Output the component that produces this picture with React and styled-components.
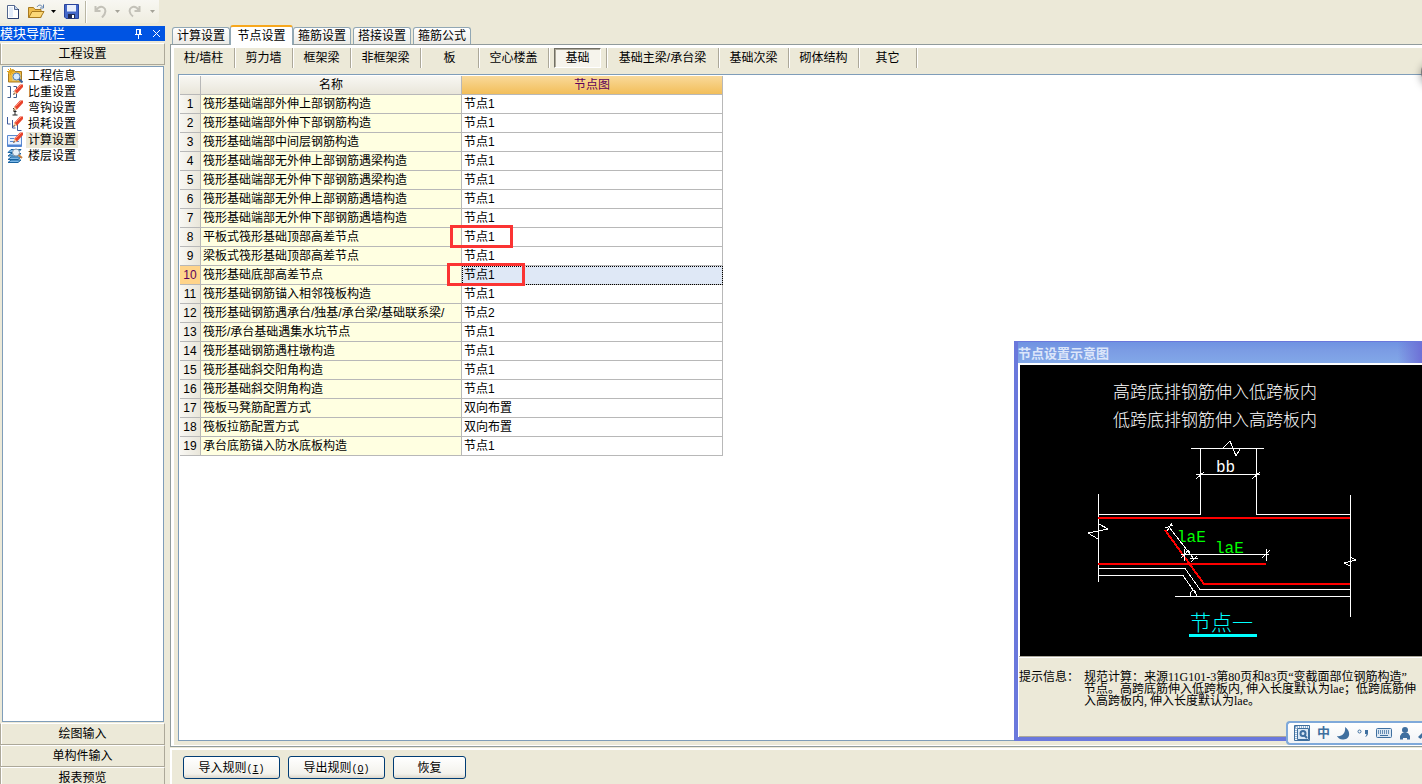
import React, { useState } from "react";
import styled, { createGlobalStyle } from "styled-components";

const modules = [
  { label: "工程信息", icon: "info" },
  { label: "比重设置", icon: "weight" },
  { label: "弯钩设置", icon: "hook" },
  { label: "损耗设置", icon: "loss" },
  { label: "计算设置", icon: "calc" },
  { label: "楼层设置", icon: "floor" },
];

const tabs = ["计算设置", "节点设置", "箍筋设置", "搭接设置", "箍筋公式"];

const categories = [
  { label: "柱/墙柱", width: 62 },
  { label: "剪力墙", width: 58 },
  { label: "框架梁", width: 58 },
  { label: "非框架梁", width: 70 },
  { label: "板", width: 58 },
  { label: "空心楼盖", width: 70 },
  { label: "基础", width: 58 },
  { label: "基础主梁/承台梁", width: 112 },
  { label: "基础次梁", width: 70 },
  { label: "砌体结构", width: 70 },
  { label: "其它", width: 58 },
];

const nodes = [
  ["筏形基础端部外伸上部钢筋构造", "节点1"],
  ["筏形基础端部外伸下部钢筋构造", "节点1"],
  ["筏形基础端部中间层钢筋构造", "节点1"],
  ["筏形基础端部无外伸上部钢筋遇梁构造", "节点1"],
  ["筏形基础端部无外伸下部钢筋遇梁构造", "节点1"],
  ["筏形基础端部无外伸上部钢筋遇墙构造", "节点1"],
  ["筏形基础端部无外伸下部钢筋遇墙构造", "节点1"],
  ["平板式筏形基础顶部高差节点", "节点1"],
  ["梁板式筏形基础顶部高差节点", "节点1"],
  ["筏形基础底部高差节点", "节点1"],
  ["筏形基础钢筋锚入相邻筏板构造", "节点1"],
  ["筏形基础钢筋遇承台/独基/承台梁/基础联系梁/", "节点2"],
  ["筏形/承台基础遇集水坑节点", "节点1"],
  ["筏形基础钢筋遇柱墩构造", "节点1"],
  ["筏形基础斜交阳角构造", "节点1"],
  ["筏形基础斜交阴角构造", "节点1"],
  ["筏板马凳筋配置方式", "双向布置"],
  ["筏板拉筋配置方式", "双向布置"],
  ["承台底筋锚入防水底板构造", "节点1"],
];

function App() {
  const [tab, setTab] = useState("节点设置");
  const [category, setCategory] = useState("基础");
  const [module, setModule] = useState("计算设置");
  const [row, setRow] = useState(9);

  return (
    <Page>
      <GlobalStyle />
      <Toolbar />
      <Body>
        <Sidebar>
          <SidebarTitle>
            <span>模块导航栏</span>
            <TitleButton aria-label="固定">
              <svg width="9" height="10" viewBox="0 0 9 10" fill="none" stroke="#fff">
                <path d="M2.5 1v4.5M5.5 1v4.5M6.5 1v4.5M2 .5h5M1 5.5h7M4.5 6v4" />
              </svg>
            </TitleButton>
            <TitleButton aria-label="关闭">
              <svg width="9" height="9" viewBox="0 0 9 9" stroke="#fff">
                <path d="M1 1l7 7M8 1L1 8" />
              </svg>
            </TitleButton>
          </SidebarTitle>
          <GroupButton $top>工程设置</GroupButton>
          <ModuleList>
            {modules.map((item) => (
              <ModuleItem key={item.label} onClick={() => setModule(item.label)}>
                <ModuleIcon name={item.icon} />
                <ModuleLabel $active={item.label === module}>
                  {item.label}
                </ModuleLabel>
              </ModuleItem>
            ))}
          </ModuleList>
          <GroupButton>绘图输入</GroupButton>
          <GroupButton>单构件输入</GroupButton>
          <GroupButton>报表预览</GroupButton>
        </Sidebar>

        <Main>
          <TabStrip>
            {tabs.map((label) => (
              <Tab
                key={label}
                $active={label === tab}
                onClick={() => setTab(label)}
              >
                {label}
              </Tab>
            ))}
          </TabStrip>
          <Panel>
            <PanelInner>
              <CategoryBar>
                {categories.map((item) => (
                  <CategorySlot key={item.label} $width={item.width}>
                    <Category
                      $active={item.label === category}
                      onClick={() => setCategory(item.label)}
                    >
                      {item.label}
                    </Category>
                  </CategorySlot>
                ))}
              </CategoryBar>
              <GridBox>
                <NodeTable>
                  <colgroup>
                    <col width="21" />
                    <col width="261" />
                    <col width="261" />
                  </colgroup>
                  <thead>
                    <tr>
                      <HeadCell />
                      <HeadCell>名称</HeadCell>
                      <HeadCell $active>节点图</HeadCell>
                    </tr>
                  </thead>
                  <tbody>
                    {nodes.map(([name, value], i) => (
                      <tr key={name} onClick={() => setRow(i)}>
                        <IndexCell $active={i === row}>{i + 1}</IndexCell>
                        <NameCell>{name}</NameCell>
                        <ValueCell $active={i === row}>
                          {value}
                          {i === 7 && <Mark />}
                          {i === 9 && <Mark $wide />}
                        </ValueCell>
                      </tr>
                    ))}
                  </tbody>
                </NodeTable>
              </GridBox>
            </PanelInner>
          </Panel>
          <Footer>
            <PushButton $wide>
              导入规则<Mnemonic>(<u>I</u>)</Mnemonic>
            </PushButton>
            <PushButton $wide>
              导出规则<Mnemonic>(<u>O</u>)</Mnemonic>
            </PushButton>
            <PushButton>恢复</PushButton>
          </Footer>
        </Main>
      </Body>
      <FloatingBall />
      <Preview />
      <InputMethodBar />
    </Page>
  );
}

const Toolbar = () => (
  <ToolbarRow>
    <ToolGroup>
      <ToolButton aria-label="新建" $width={26}>
        <svg width="12" height="14" viewBox="0 0 12 14">
          <path d="M.5.5h7l4 4v9H.5z" fill="#fff" stroke="#53678f" />
          <path d="M2 12.5V2h4v10z" fill="#e3ecfa" />
          <path d="M7.5.5v4h4" fill="#c5d5ee" stroke="#53678f" />
          <path d="M11.5 4v9.500H1" fill="none" stroke="#2b3f70" />
        </svg>
      </ToolButton>
      <ToolButton aria-label="打开" $width={20}>
        <svg width="17" height="15" viewBox="0 0 17 15">
          <path d="M.5 13.5v-10h5l1.500 2h6v8z" fill="#f0bd4c" stroke="#a87a20" />
          <path d="M.8 13.500l3.200-6h12l-3.500 6z" fill="#fcd878" stroke="#a87a20" />
          <path d="M9 3c1.500-2.500 4-2.500 5.500 0M15.500.5v3.500h-3.500" fill="none" stroke="#5d7fae" />
        </svg>
      </ToolButton>
      <ToolButton aria-label="打开选项" $width={15}>
        <Caret color="#000" />
      </ToolButton>
      <ToolButton aria-label="保存" $width={20}>
        <svg width="15" height="15" viewBox="0 0 15 15">
          <path d="M.5.5h14v14H2L.5 13z" fill="#4468c8" stroke="#29439b" />
          <path d="M3 1h9v6.500H3z" fill="#e9effc" />
          <path d="M4 10h7v4.500H4z" fill="#222c55" />
          <path d="M8 11h2v3H8z" fill="#fff" />
        </svg>
      </ToolButton>
      <ToolDivider />
      <ToolButton aria-label="撤销" $width={22}>
        <svg width="13" height="13" viewBox="0 0 13 13" fill="none" stroke="#c3c1b8" strokeWidth="2">
          <path d="M1.500 1v5h5M2 5.500C4 2.500 7 1 9.500 2.500s3 5.500-1.500 10" />
        </svg>
      </ToolButton>
      <ToolButton aria-label="撤销选项" $width={12}>
        <Caret color="#a5a399" />
      </ToolButton>
      <ToolButton aria-label="恢复" $width={22}>
        <svg width="13" height="13" viewBox="0 0 13 13" fill="none" stroke="#c3c1b8" strokeWidth="2">
          <path d="M11.500 1v5h-5M11 5.500C9 2.500 6 1 3.500 2.500s-3 5.500 1.500 9" />
        </svg>
      </ToolButton>
      <ToolButton aria-label="恢复选项" $width={14}>
        <Caret color="#a5a399" />
      </ToolButton>
    </ToolGroup>
  </ToolbarRow>
);

const Caret = ({ color }) => (
  <svg width="5" height="3" viewBox="0 0 5 3">
    <path d="M0 0h5L2.500 3z" fill={color} />
  </svg>
);

const Pencil = () => (
  <>
    <path d="M7 10l.5-3.500L13 .5h3v2.500L10 9.500z" fill="#e8432c" />
    <path d="M8.500 6.500L14 1" stroke="#ff8d75" />
    <path d="M6 11l1.500-4.500 2.500 3z" fill="#f4c79a" />
    <path d="M6 11l1-2 1 1z" fill="#333" />
  </>
);

const ModuleIcon = ({ name }) => (
  <svg width="16" height="16" viewBox="0 0 16 16" fill="none">
    {name === "info" && (
      <>
        <path d="M1.500 4.500v9.500h13V3.500H8l-1-1.500H4z" fill="#f1b93c" stroke="#a87a20" />
        <path d="M5 6h9v7H5z" fill="#e2c675" />
        <path d="M3.500 0v7M0 3.500h7M1 1l5 5M6 1L1 6" stroke="#e3a51a" />
        <circle cx="9.500" cy="8.500" r="3.500" fill="#d7ebff" stroke="#547fb5" />
        <path d="M12 11l3.500 3.500" stroke="#375f9c" strokeWidth="2" />
      </>
    )}
    {name === "weight" && (
      <>
        <path d="M.5 2.500h3v11h-3M6.500 2.500h3v5h-3M9.500 7.500v6h-3" stroke="#3e5b8b" />
        <Pencil />
      </>
    )}
    {name === "hook" && (
      <>
        <path d="M6 8.500h4M8 8v7M5.500 15h5M6.500 11.500h3" stroke="#222" />
        <Pencil />
      </>
    )}
    {name === "loss" && (
      <>
        <path d="M.5 1v7h3M5.500 4v8h3M10.500 8v6.500h4" stroke="#3e5b9b" />
        <Pencil />
      </>
    )}
    {name === "calc" && (
      <>
        <path d="M.5 3.500h14v11H.5z" fill="#e8f1ff" stroke="#5a89cf" />
        <path d="M.5 12.500h14v2H.5z" fill="#4f82d0" />
        <path d="M3 6.500h4M3 9.500h9" stroke="#5a89cf" />
        <Pencil />
      </>
    )}
    {name === "floor" && (
      <>
        <path d="M1 4.500l3-3h10l-3 3zM1 8l3-2.500h10L11 8zM1 11.500L4 9h10l-3 2.500zM1 14.500L4 12h10l-3 2.500z" fill="#7db8e8" stroke="#17629f" />
        <circle cx="9" cy="4.500" r="3.500" fill="#e6f0f8" stroke="#8397ad" />
        <path d="M11.500 7l3.500 3" stroke="#c57e3e" strokeWidth="2" />
      </>
    )}
  </svg>
);

const Preview = () => (
  <PreviewWindow>
    <PreviewTitle>节点设置示意图</PreviewTitle>
    <PreviewBody>
      <Drawing viewBox="0 0 402 291" width="402" height="291">
        <g fill="#fff" fontSize="17" fontWeight="300">
          <text x="93" y="33">高跨底排钢筋伸入低跨板内</text>
          <text x="93" y="61">低跨底排钢筋伸入高跨板内</text>
        </g>
        <g fill="none" stroke="#fff" shapeRendering="crispEdges">
          <path d="M171 83.500h73M180.500 84v65.500H78M236.500 84v65.500h94" />
          <path d="M203 83l7-7 6 15 4-7" />
          <path d="M176 109.500h64M176 114l8-7M232 114l8-7" />
          <path d="M78.500 129v88M330.500 130v122" />
          <path d="M79 159l9 5-20 4 10 6" />
          <path d="M330 192l6 3-12 3 6 3" />
          <path d="M78 203.500h87l15 21h150" />
          <path d="M78 210.500h85l14 20M155 231.500h175" />
          <path d="M170 231c0-5 3-7 6-4" />
        </g>
        <g fill="none" stroke="#f00" strokeWidth="2" shapeRendering="crispEdges">
          <path d="M78 153h252M78 199h168M145 165l39 54h146" />
        </g>
        <g fill="none" stroke="#fff" shapeRendering="crispEdges">
          <path d="M149 162l25 32M145 163l8-3M147 166l5-8M170 193l8 1M171 197l6-6M166 186l4 0" />
          <path d="M161 189.500h88M164.500 184v12M161 193l8-8M246.500 184v12M242 193l8-8" />
        </g>
        <g fontFamily='"Liberation Mono", monospace' fontSize="16">
          <text x="196" y="107" fill="#fff">bb</text>
          <text x="157" y="177" fill="#0f0">laE</text>
          <text x="195" y="188" fill="#0f0">laE</text>
        </g>
        <text x="170" y="265" fill="#0ff" fontSize="21" fontWeight="300">节点一</text>
        <path d="M169 270.500h68" stroke="#0ff" strokeWidth="3" />
      </Drawing>
      <Hint>
        <span>提示信息：</span>
        <HintText>
          规范计算：来源11G101-3第80页和83页“变截面部位钢筋构造”
          <br />
          节点。高跨底筋伸入低跨板内, 伸入长度默认为lae；低跨底筋伸
          <br />
          入高跨板内, 伸入长度默认为lae。
        </HintText>
      </Hint>
    </PreviewBody>
  </PreviewWindow>
);

const InputMethodBar = () => (
  <ImeBar>
    <svg width="16" height="16" viewBox="0 0 16 16" fill="none" stroke="#3f6f9f">
      <path d="M.5.5h15v15H.5z" fill="#f3f8fd" />
      <path d="M3.500 3.500h11v11h-11z" fill="#dbe8f5" />
      <path d="M1 2h14M2 1v14" strokeDasharray="1 1" />
      <circle cx="9" cy="8.500" r="2.500" strokeWidth="2" />
      <path d="M10 10l3 3" strokeWidth="2" />
    </svg>
    <ImeMode>中</ImeMode>
    <svg width="13" height="13" viewBox="0 0 13 13" fill="#3f6f9f">
      <path d="M8 0c6 4 5.500 12-1.500 12.500C3 12.800 1 11 0 9c5 1 9-3 8-9z" />
    </svg>
    <svg width="12" height="10" viewBox="0 0 12 10" fill="none" stroke="#3f6f9f">
      <circle cx="2.500" cy="3.500" r="1.500" />
      <path d="M8 2h3v3c0 2-1 3.500-3 4 1-1 1.500-2 1.500-3H8z" fill="#3f6f9f" stroke="none" />
    </svg>
    <svg width="16" height="10" viewBox="0 0 16 10" fill="none" stroke="#3f6f9f">
      <rect x=".5" y=".5" width="15" height="9" rx="1" fill="#dce8f4" />
      <path d="M2 3h12M2 5h12" strokeDasharray="1 1" strokeWidth="1.500" />
      <path d="M4 7.500h8" />
    </svg>
    <svg width="12" height="13" viewBox="0 0 12 13" fill="#3f6f9f">
      <circle cx="6" cy="3" r="3" />
      <path d="M3 6h6l2 3v3.500H8V11H4v1.500H1V9z" />
    </svg>
    <svg width="12" height="13" viewBox="0 0 12 13" fill="#3f6f9f">
      <path d="M0 10l5-5c-1-3 1-5 4-4L7.500 3l2 2L12 3.500c0 3-2 4-4.500 3.500l-5 5z" />
    </svg>
  </ImeBar>
);

const GlobalStyle = createGlobalStyle`
  * {
    box-sizing: border-box;
  }
  body {
    margin: 0;
    background: #ece9d8;
    color: #000;
    font: 12px/16px "Liberation Sans", "Noto Sans CJK SC", sans-serif;
  }
  button {
    margin: 0;
    padding: 0;
    border: 0;
    background: none;
    color: inherit;
    font: inherit;
  }
  svg {
    flex: none;
  }
`;

const Page = styled.div`
  position: relative;
  display: flex;
  flex-direction: column;
  height: 100vh;
  overflow: hidden;
`;

const ToolbarRow = styled.header`
  display: flex;
  flex: none;
  height: 26px;
`;

const ToolGroup = styled.div`
  display: flex;
  align-items: center;
  height: 23px;
  background: linear-gradient(#f8f7f2, #efede0);
  border-radius: 0 0 3px 0;
`;

const ToolButton = styled.button`
  display: flex;
  align-items: center;
  justify-content: center;
  width: ${(props) => props.$width}px;
  height: 22px;
`;

const ToolDivider = styled.span`
  width: 2px;
  height: 22px;
  margin: 0 2px 0 4px;
  border-left: 1px solid #b9b6a4;
  border-right: 1px solid #fff;
`;

const Body = styled.div`
  display: flex;
  flex: 1;
  min-height: 0;
`;

/* the last group runs a little past the bottom of the window */
const Sidebar = styled.aside`
  display: flex;
  flex-direction: column;
  flex: none;
  width: 165px;
  margin-bottom: -5px;
`;

const SidebarTitle = styled.div`
  display: flex;
  align-items: center;
  flex: none;
  height: 15px;
  margin-bottom: 2px;
  background: #0054e3;
  color: #fff;
  span {
    flex: 1;
    font-size: 13px;
    line-height: 15px;
  }
`;

const TitleButton = styled.button`
  display: flex;
  align-items: center;
  justify-content: center;
  width: 18px;
  height: 15px;
`;

const GroupButton = styled.button`
  flex: none;
  height: ${(props) => (props.$top ? "22px" : "22px")};
  border: 1px solid;
  border-color: #fff #aca899 #aca899 #aca899;
  box-shadow: inset 1px 0 #fff;
`;

const ModuleList = styled.nav`
  flex: 1;
  min-height: 0;
  margin: 1px 1px 1px 2px;
  padding: 1px 0 0 4px;
  border: 1px solid #7f9db9;
  background: #fff;
`;

const ModuleItem = styled.button`
  display: flex;
  align-items: center;
  gap: 3px;
  height: 16px;
`;

const ModuleLabel = styled.span`
  padding: 0 2px;
  background: ${(props) => (props.$active ? "#ece9d8" : "none")};
`;

const Main = styled.main`
  display: flex;
  flex-direction: column;
  flex: 1;
  min-width: 0;
  padding-left: 5px;
`;

const TabStrip = styled.div`
  display: flex;
  align-items: flex-end;
  flex: none;
  gap: 2px;
  height: 18px;
  padding-left: 2px;
`;

const Tab = styled.button`
  position: relative;
  z-index: ${(props) => (props.$active ? 1 : 0)};
  width: ${(props) => (props.$active ? "63px" : "58px")};
  height: ${(props) => (props.$active ? "20px" : "17px")};
  margin: ${(props) => (props.$active ? "0 -2px -1px" : "0")};
  border: 1px solid #91a7b4;
  border-bottom: 0;
  border-top: ${(props) => (props.$active ? "2px solid #f7a71c" : "1px solid #91a7b4")};
  border-radius: 3px 3px 0 0;
  background: ${(props) =>
    props.$active ? "#fff" : "linear-gradient(#fff, #ecebe6)"};
`;

const Panel = styled.section`
  display: flex;
  flex: 1;
  min-height: 0;
  padding: 3px 0 1px 3px;
  border: 1px solid #919b9c;
  border-right: 0;
  background: #fff;
`;

const PanelInner = styled.div`
  display: flex;
  flex-direction: column;
  flex: 1;
  min-width: 0;
  padding: 0 0 4px 4px;
  background: #ece9d8;
`;

const CategoryBar = styled.div`
  display: flex;
  flex: none;
  height: 26px;
  margin-left: -5px;
`;

const CategorySlot = styled.div`
  display: flex;
  flex: none;
  width: ${(props) => props.$width}px;
  height: 20px;
  padding: 0 5px;
  border-right: 1px solid #aca899;
  box-shadow: 1px 0 #fff;
`;

const Category = styled.button`
  flex: 1;
  border: 1px solid;
  border-color: ${(props) =>
    props.$active ? "#716f64 #fff #fff #716f64" : "transparent"};
  box-shadow: ${(props) => (props.$active ? "inset 1px 1px #aca899" : "none")};
  background: ${(props) => (props.$active ? "#f6f4ec" : "none")};
  white-space: nowrap;
`;

const GridBox = styled.div`
  flex: 1;
  min-height: 0;
  padding: 1px;
  border: 1px solid #7f9db9;
  border-right: 0;
  background: #fff;
  overflow: hidden;
`;

const NodeTable = styled.table`
  width: 543px;
  table-layout: fixed;
  border-collapse: separate;
  border-spacing: 0;
  th,
  td {
    height: 19px;
    padding: 0;
    border-right: 1px solid #b8b8b8;
    border-bottom: 1px solid #b8b8b8;
    line-height: 18px;
    white-space: nowrap;
  }
`;

const HeadCell = styled.th`
  background: ${(props) =>
    props.$active
      ? "linear-gradient(#f9d99a, #f2be5a)"
      : "linear-gradient(#f8f7f3, #e9e6da)"};
  color: ${(props) => (props.$active ? "#5c005c" : "#000")};
  font-weight: normal;
`;

const IndexCell = styled.td`
  background: ${(props) =>
    props.$active ? "#ffd48a" : "linear-gradient(90deg, #f8f7f3, #e9e6da)"};
  color: ${(props) => (props.$active ? "#5c005c" : "#000")};
  text-align: center;
`;

const NameCell = styled.td`
  && {
    padding-left: 2px;
  }
  background: #ffffe1;
`;

const ValueCell = styled.td`
  position: relative;
  && {
    padding-left: 2px;
  }
  background: ${(props) => (props.$active ? "#dfe8f6" : "#fff")};
  outline: ${(props) => (props.$active ? "1px dotted #000" : "none")};
  outline-offset: -1px;
`;

// red frame drawn over a value that needs attention
const Mark = styled.span`
  position: absolute;
  z-index: 1;
  top: -3px;
  left: ${(props) => (props.$wide ? "-15px" : "-12px")};
  width: ${(props) => (props.$wide ? "78px" : "63px")};
  height: 23px;
  border: 3px solid #fb3433;
`;

const Footer = styled.footer`
  display: flex;
  align-items: flex-start;
  flex: none;
  gap: 8px;
  height: 36px;
  margin-top: 1px;
  padding: 6px 0 0 11px;
  border-top: 2px solid #fff;
  border-left: 2px solid #fff;
`;

const PushButton = styled.button`
  width: ${(props) => (props.$wide ? "97px" : "73px")};
  height: 23px;
  border: 1px solid #003c74;
  border-radius: 3px;
  background: linear-gradient(#fff, #f3f2ec 80%, #dcd7cb);
`;

const Mnemonic = styled.span`
  font: 10px "Liberation Mono", monospace;
`;

const FloatingBall = styled.div`
  position: absolute;
  top: 60px;
  right: -23px;
  width: 24px;
  height: 24px;
  border-radius: 50%;
  background: #777;
  box-shadow: 0 3px 8px rgba(0, 0, 0, 0.4);
`;

const PreviewWindow = styled.section`
  position: absolute;
  right: 0;
  bottom: 43px;
  width: 408px;
  border: solid #6a78dc;
  border-width: 1px 0 4px 4px;
  box-shadow: inset 0 -1px #aca899;
  background: #ece9d8;
`;

const PreviewTitle = styled.h2`
  height: 21px;
  margin: 0;
  background: linear-gradient(90deg, transparent 94%, #6d70d6),
    linear-gradient(#6f92e2, #7b9ce4 40%, #82a8e8);
  color: #dce6fa;
  font-size: 13px;
  line-height: 24px;
`;

const PreviewBody = styled.div`
  border: 2px solid #fff;
  border-width: 2px 0 0 1px;
`;

const Drawing = styled.svg`
  display: block;
  width: 100%;
  height: 291px;
  border-left: 1px solid #fff;
  background: #000;
`;

const Hint = styled.div`
  display: flex;
  gap: 5px;
  height: 81px;
  padding-top: 14px;
  border-top: 1px solid #aca899;
  box-shadow: inset 0 1px #fff;
  line-height: 12px;
  span {
    flex: none;
  }
`;

const HintText = styled.p`
  margin: 0;
  font-family: "Liberation Serif", "Noto Sans CJK SC", serif;
  white-space: nowrap;
`;

const ImeBar = styled.div`
  position: absolute;
  right: 0;
  bottom: 39px;
  display: flex;
  align-items: center;
  gap: 7px;
  width: 136px;
  height: 24px;
  padding-left: 6px;
  border: 2px solid #7fa9da;
  border-right: 0;
  border-radius: 4px 0 0 4px;
  background: linear-gradient(#fff, #f1f3f6);
  overflow: hidden;
`;

const ImeMode = styled.span`
  color: #3f6f9f;
  font-size: 13px;
  font-weight: bold;
`;

export default App;
